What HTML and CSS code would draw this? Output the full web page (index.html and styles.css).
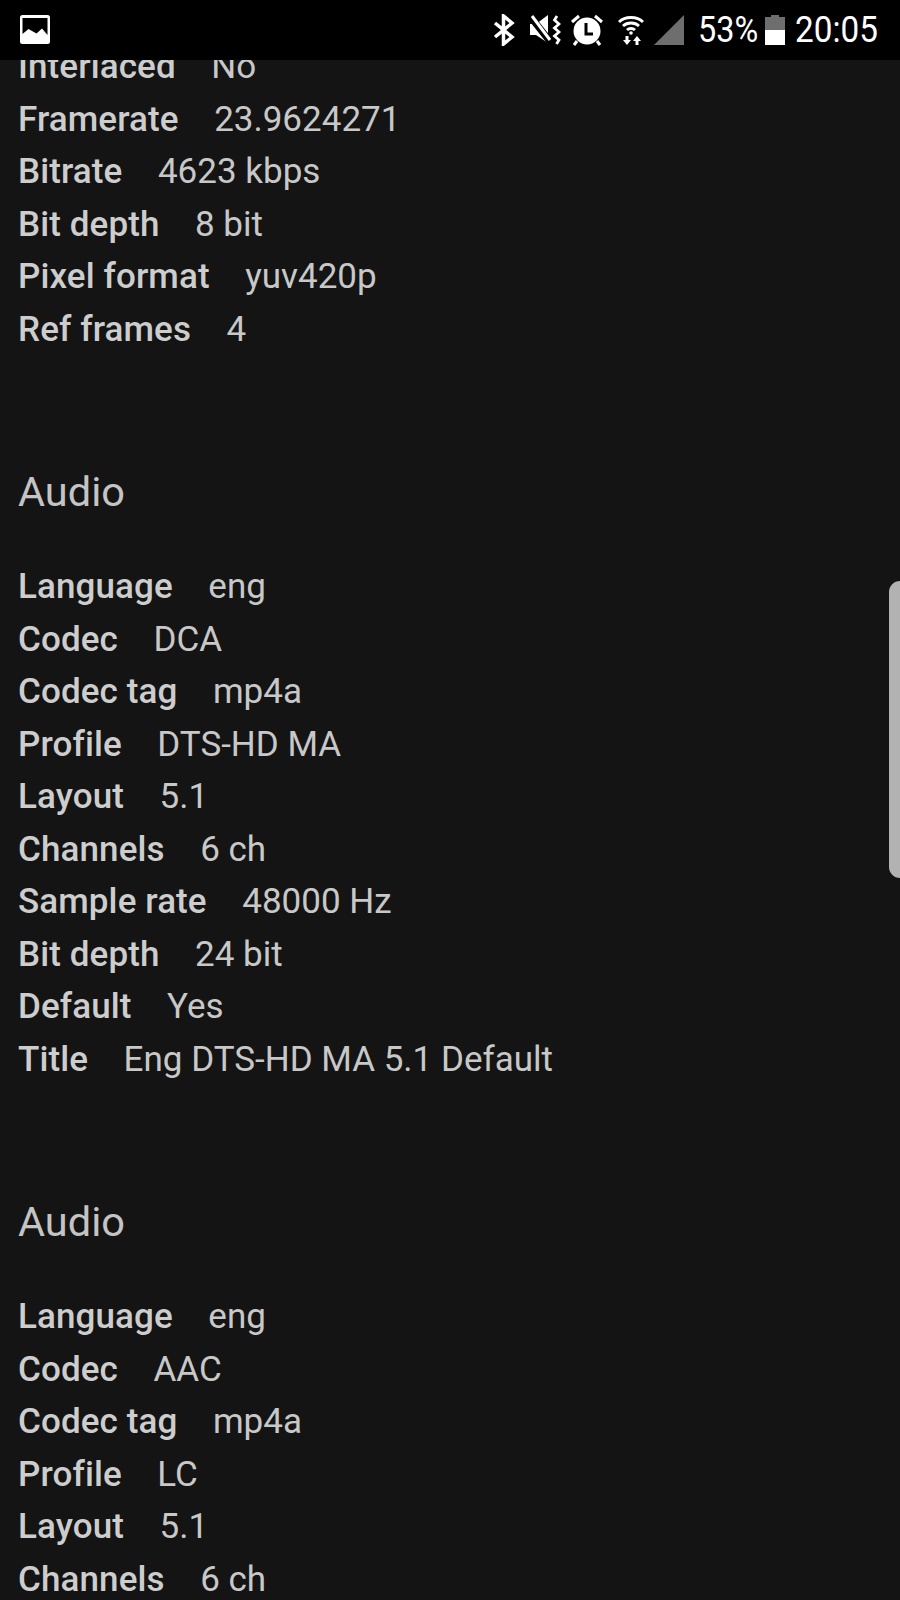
FILE: index.html
```html
<!DOCTYPE html>
<html lang="en">
<head>
<meta charset="utf-8">
<title>Media info</title>
<link rel="stylesheet" href="styles.css">
</head>
<body>
<header class="status">
  <svg class="ic-pic" viewBox="0 0 30 30"><rect x="0" y="0" width="30" height="29" rx="2.5" fill="#fff"/><path d="M2.5 3H27.5V20L22 13.5L16.5 18.5L8.5 14L2.5 19Z" fill="#000"/></svg>
  <div class="status-right">
    <svg class="ic-bt" viewBox="0 0 22 32"><path d="M2 9L19 23L10.500 30V2L19 9L2 23" fill="none" stroke="#fff" stroke-width="3.500"/></svg>
    <svg class="ic-mute" viewBox="0 0 32 30"><path d="M1 9H7L19 0V28L7 20H1Z" fill="#fff"/><path d="M1 1L23 29" stroke="#000" stroke-width="7"/><path d="M3 1L21 25" stroke="#fff" stroke-width="3"/><path d="M28 1L25.500 5L30 9L25.500 13L30 17L25.500 21L30 25L27.500 29" fill="none" stroke="#fff" stroke-width="2.800"/></svg>
    <svg class="ic-alarm" viewBox="0 0 32 32"><circle cx="16" cy="17" r="13.500" fill="#fff"/><path d="M1 8L8 2M31 8L24 2M6 27L3 31M26 27L29 31" stroke="#fff" stroke-width="3"/><path d="M15 9V20H22" fill="none" stroke="#000" stroke-width="3"/></svg>
    <svg class="ic-wifi" viewBox="0 0 28 32"><path d="M2 8C8 2 20 2 26 8M6 12C10 8 18 8 22 12M10 16C12 14 16 14 18 16" fill="none" stroke="#fff" stroke-width="2.800"/><circle cx="14" cy="19" r="1.800" fill="#fff"/><path d="M8.500 22H11.500V26H14L10 31L6 26H8.500ZM18.500 31H21.500V27H24L20 22L16 27H18.500Z" fill="#fff"/></svg>
    <svg class="ic-signal" viewBox="0 0 30 30"><path d="M30 0V30H0Z" fill="#6e6e6e"/></svg>
    <span class="pct">53%</span>
    <svg class="ic-batt" viewBox="0 0 20 30"><path d="M6 0H14V2H20V15H0V2H6Z" fill="#6e6e6e"/><rect x="0" y="15" width="20" height="15" fill="#fff"/></svg>
    <span class="clock">20:05</span>
  </div>
</header>
<main class="content">
  <section class="group group-first">
    <p class="row"><b>Interlaced</b><span>No</span></p>
    <p class="row"><b>Framerate</b><span>23.9624271</span></p>
    <p class="row"><b>Bitrate</b><span>4623 kbps</span></p>
    <p class="row"><b>Bit depth</b><span>8 bit</span></p>
    <p class="row"><b>Pixel format</b><span>yuv420p</span></p>
    <p class="row"><b>Ref frames</b><span>4</span></p>
  </section>
  <section class="group">
    <h2>Audio</h2>
    <p class="row"><b>Language</b><span>eng</span></p>
    <p class="row"><b>Codec</b><span>DCA</span></p>
    <p class="row"><b>Codec tag</b><span>mp4a</span></p>
    <p class="row"><b>Profile</b><span>DTS-HD MA</span></p>
    <p class="row"><b>Layout</b><span>5.1</span></p>
    <p class="row"><b>Channels</b><span>6 ch</span></p>
    <p class="row"><b>Sample rate</b><span>48000 Hz</span></p>
    <p class="row"><b>Bit depth</b><span>24 bit</span></p>
    <p class="row"><b>Default</b><span>Yes</span></p>
    <p class="row"><b>Title</b><span>Eng DTS-HD MA 5.1 Default</span></p>
  </section>
  <section class="group">
    <h2>Audio</h2>
    <p class="row"><b>Language</b><span>eng</span></p>
    <p class="row"><b>Codec</b><span>AAC</span></p>
    <p class="row"><b>Codec tag</b><span>mp4a</span></p>
    <p class="row"><b>Profile</b><span>LC</span></p>
    <p class="row"><b>Layout</b><span>5.1</span></p>
    <p class="row"><b>Channels</b><span>6 ch</span></p>
  </section>
</main>
<div class="scrollbar"></div>
</body>
</html>
```
FILE: styles.css
```css
html, body { margin: 0; padding: 0; }
body {
  width: 900px;
  height: 1600px;
  overflow: hidden;
  background: #141414;
  color: #c8c8c8;
  font-family: Roboto, "Liberation Sans", sans-serif;
  display: flex;
  flex-direction: column;
  position: relative;
}
.status {
  flex: 0 0 60px;
  height: 60px;
  background: #000;
  display: flex;
  align-items: center;
  justify-content: space-between;
  padding: 0 24px 0 20px;
  position: relative;
  z-index: 1;
  color: #fff;
}
.status svg { display: block; flex: none; }
.status-right { display: flex; align-items: center; }
.ic-pic { width: 30px; height: 30px; }
.ic-bt { width: 22px; height: 32px; margin-right: 14px; }
.ic-mute { width: 32px; height: 30px; margin-right: 10px; }
.ic-alarm { width: 32px; height: 32px; margin-right: 14px; }
.ic-wifi { width: 28px; height: 32px; margin-right: 9px; }
.ic-signal { width: 30px; height: 30px; margin-right: 14px; }
.pct, .clock { font-size: 36px; line-height: 60px; display: inline-block; transform-origin: left center; }
.pct { width: 60px; transform: scaleX(0.9); }
.clock { width: 81px; transform: scaleX(0.925); }
.ic-batt { width: 20px; height: 30px; margin: 0 10px 0 7px; }
.content { flex: 1; min-height: 0; padding: 0 18px; margin-top: -19px; }
.row { margin: 0; height: 52.5px; line-height: 52.5px; font-size: 35px; white-space: nowrap; }
.row b { font-weight: 500; margin-right: 35.5px; letter-spacing: 0.1px; color: #cdcdcd; }
h2 { margin: 111px 0 44px; font-size: 41.5px; font-weight: 400; line-height: 50px; color: #c4c4c4; }
.scrollbar {
  position: absolute;
  right: 0;
  top: 581px;
  width: 11px;
  height: 297px;
  background: #b2b2b2;
  border-radius: 12px 0 0 12px;
}
```
